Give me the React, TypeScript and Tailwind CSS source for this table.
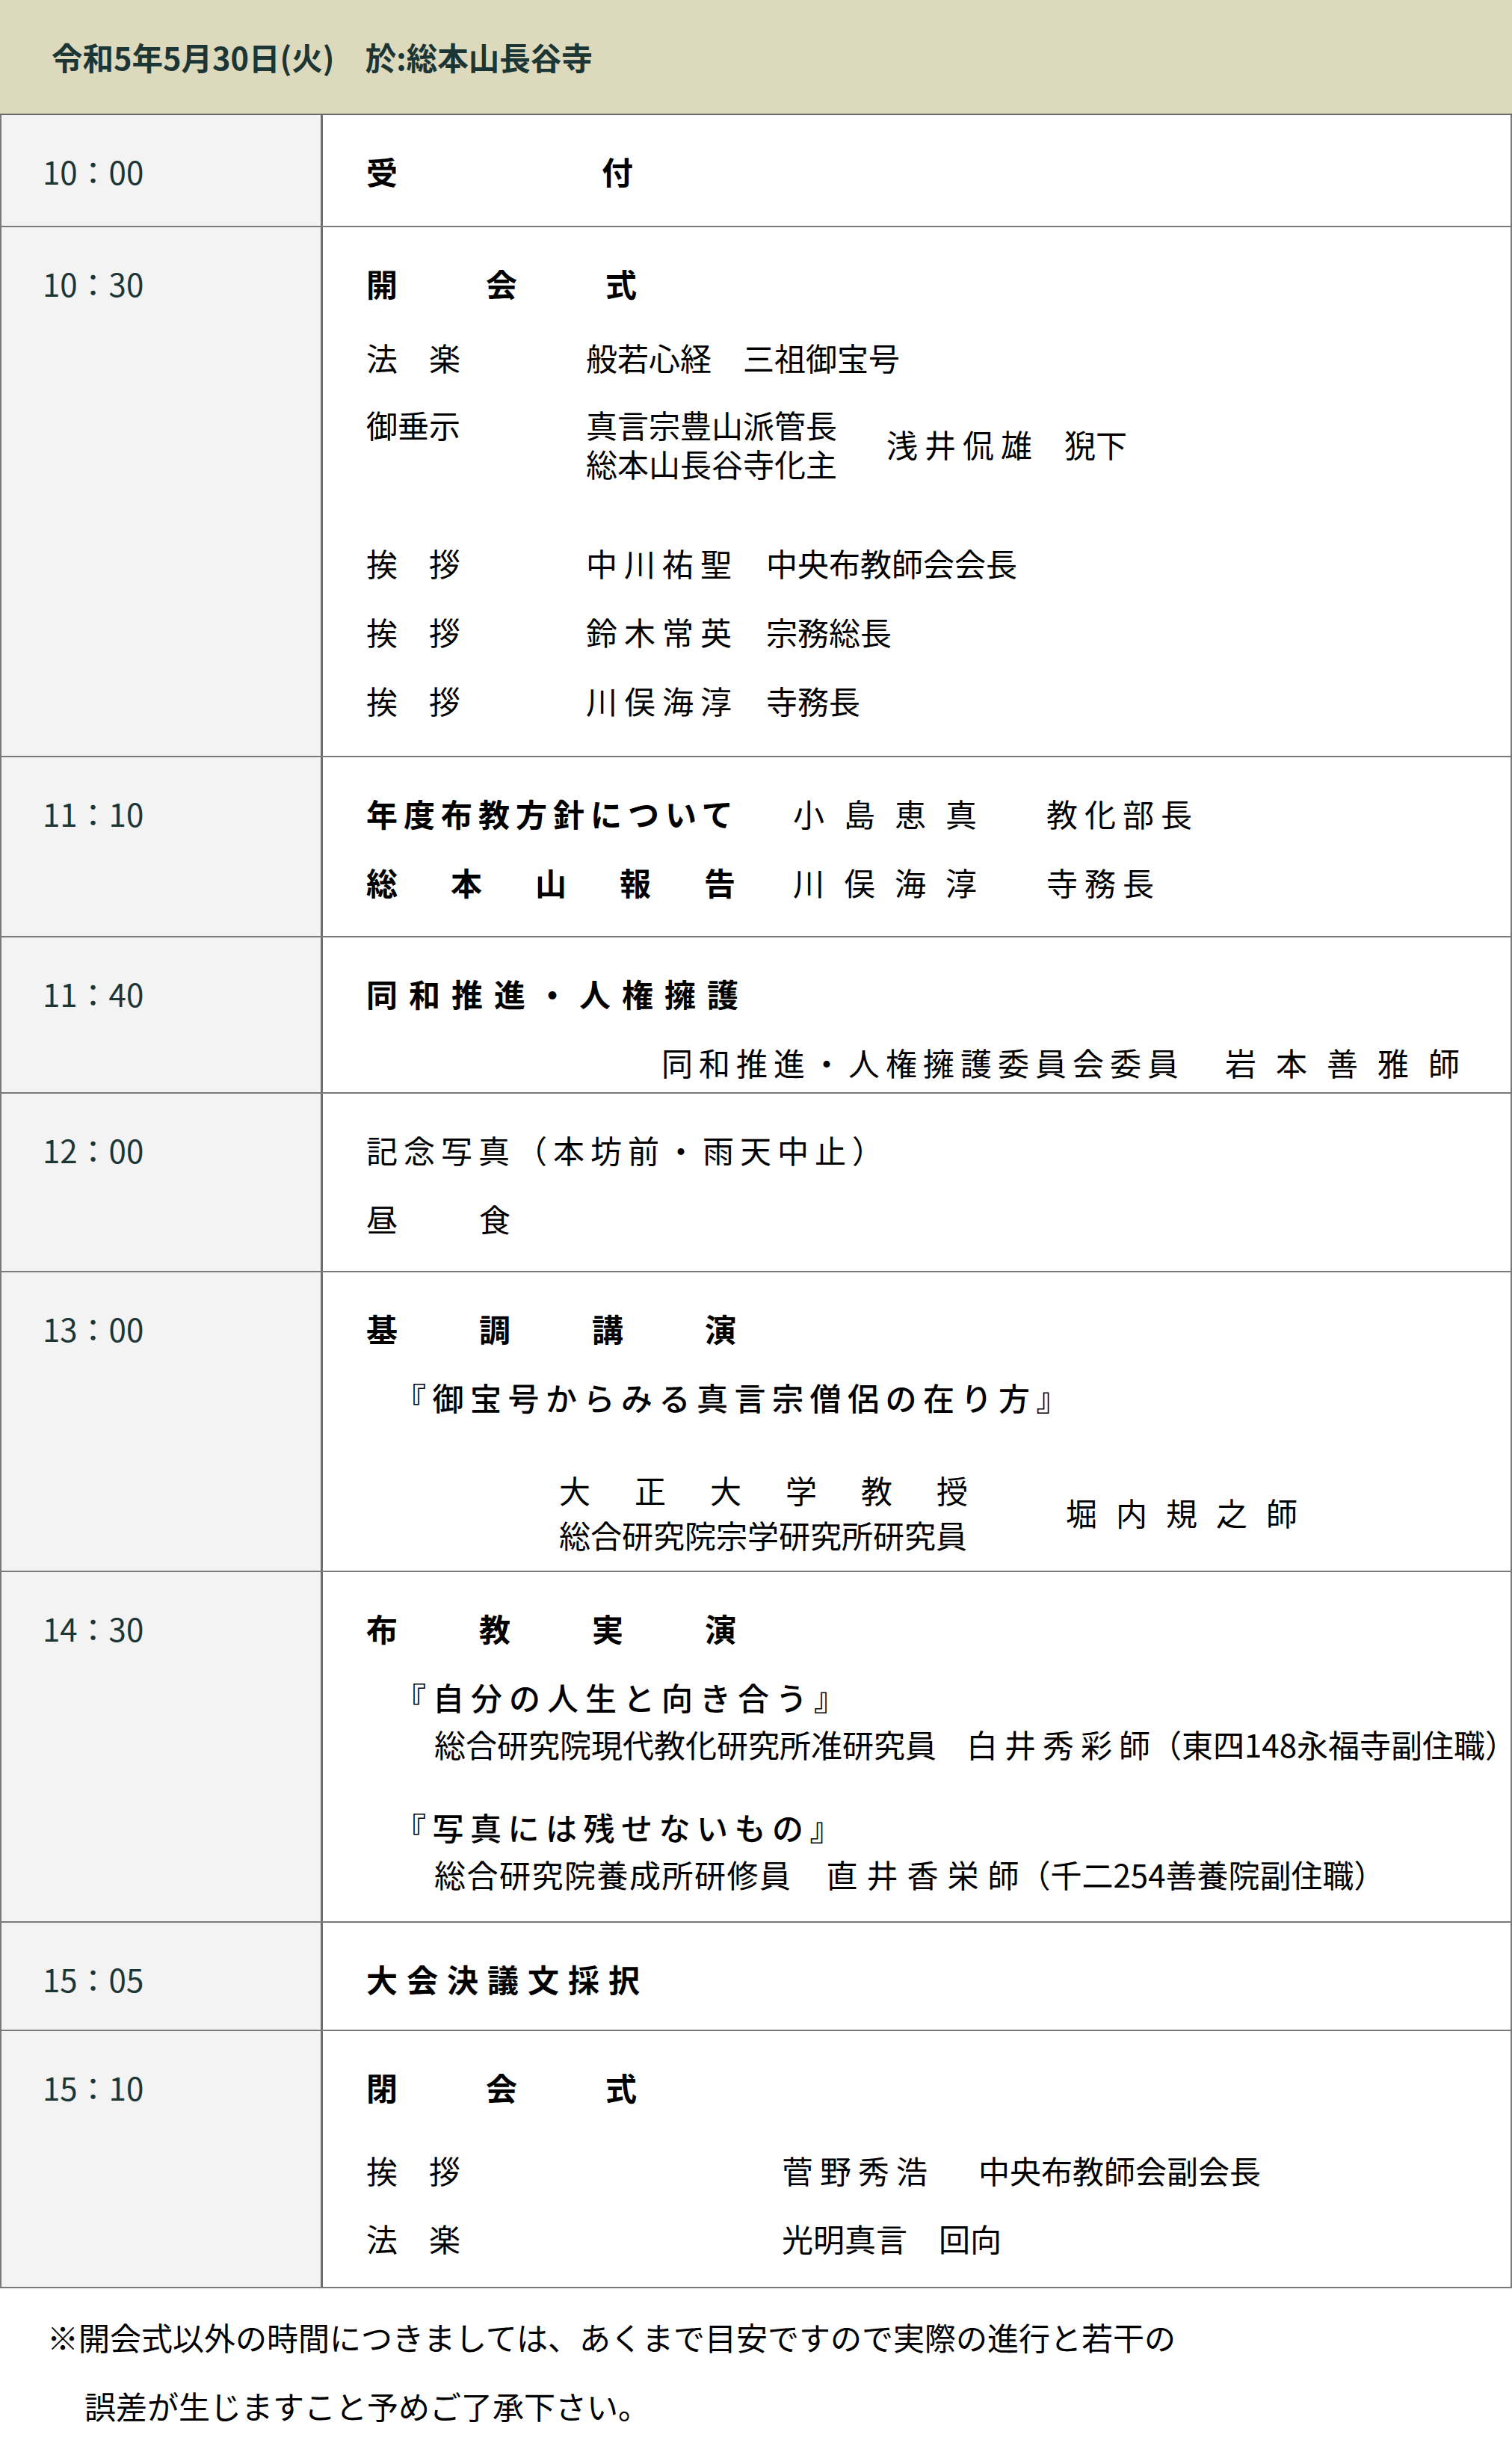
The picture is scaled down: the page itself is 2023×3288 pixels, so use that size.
import type { ReactNode } from 'react';

// --- layout helpers --------------------------------------------------------

/** One text line of the programme: fixed 46px line box, never wraps. */
function L({ className = '', children }: { className?: string; children: ReactNode }) {
  return <div className={'flex h-[46px] items-center whitespace-nowrap ' + className}>{children}</div>;
}

/** A timetable row: grey time cell on the left, programme on the right. */
function Row({ time, className, children }: { time: string; className: string; children: ReactNode }) {
  return (
    <div className={'flex border-b-2 border-[#7a7a7a] ' + className}>
      <div className="w-[430px] shrink-0 border-r-[3px] border-[#6e6e6e] bg-[#f3f3f3] pl-[55px] pt-[52px]">
        <div className="h-[46px] leading-[46px] text-[#1c3636]">{time}</div>
      </div>
      <div className="min-w-0 flex-1 overflow-hidden pl-[58px] pt-[52px] text-black">{children}</div>
    </div>
  );
}

// --- page ------------------------------------------------------------------

export default function App() {
  return (
    <div className="w-[2023px] overflow-hidden bg-white font-['Noto_Sans_CJK_JP','Noto_Sans',sans-serif] text-[42px] leading-[46px]">
      <div className="flex h-[154px] items-center border-b-2 border-[#686868] bg-[#dcd9bc] pl-[69px] text-[41.5px] font-bold text-[#1c3636]">
        令和5年5月30日(火)　於:総本山長谷寺
      </div>

      <div className="border-x-2 border-[#7a7a7a]">
        <Row time="10：00" className="h-[150px]">
          <L className="font-bold">
            <span>受</span>
            <span className="ml-[273px]">付</span>
          </L>
        </Row>

        <Row time="10：30" className="h-[709px]">
          <L className="font-bold tracking-[118px]">開会式</L>
          <L className="mt-[53px]">
            <span className="w-[294px] shrink-0">法　楽</span>
            <span>般若心経　三祖御宝号</span>
          </L>
          <div className="mt-[41px] flex whitespace-nowrap">
            <span className="w-[294px] shrink-0 leading-[52px]">御垂示</span>
            <div className="leading-[52px]">
              <div>真言宗豊山派管長</div>
              <div>総本山長谷寺化主</div>
            </div>
            <div className="ml-[66px] self-center">
              <span className="tracking-[9px]">浅井侃雄</span>
              <span className="ml-[34px]">猊下</span>
            </div>
          </div>
          <L className="mt-[84px]">
            <span className="w-[294px] shrink-0">挨　拶</span>
            <span className="tracking-[9px]">中川祐聖</span>
            <span className="ml-[37px]">中央布教師会会長</span>
          </L>
          <L className="mt-[46px]">
            <span className="w-[294px] shrink-0">挨　拶</span>
            <span className="tracking-[9px]">鈴木常英</span>
            <span className="ml-[37px]">宗務総長</span>
          </L>
          <L className="mt-[46px]">
            <span className="w-[294px] shrink-0">挨　拶</span>
            <span className="tracking-[9px]">川俣海淳</span>
            <span className="ml-[37px]">寺務長</span>
          </L>
        </Row>

        <Row time="11：10" className="h-[241px]">
          <L>
            <span className="w-[571px] shrink-0 font-bold tracking-[8px]">年度布教方針について</span>
            <span className="w-[339px] shrink-0 tracking-[26px]">小島恵真</span>
            <span className="tracking-[9px]">教化部長</span>
          </L>
          <L className="mt-[46px]">
            <span className="w-[571px] shrink-0 font-bold tracking-[71px]">総本山報告</span>
            <span className="w-[339px] shrink-0 tracking-[26px]">川俣海淳</span>
            <span className="tracking-[9px]">寺務長</span>
          </L>
        </Row>

        <Row time="11：40" className="h-[209px]">
          <L className="font-bold tracking-[15px]">同和推進・人権擁護</L>
          <L className="mt-[46px] pl-[395px]">
            <span className="tracking-[8px]">同和推進・人権擁護委員会委員</span>
            <span className="ml-[54px] tracking-[26px]">岩本善雅師</span>
          </L>
        </Row>

        <Row time="12：00" className="h-[239px]">
          <L className="tracking-[8px]">記念写真（本坊前・雨天中止）</L>
          <L className="mt-[46px] tracking-[109px]">昼食</L>
        </Row>

        <Row time="13：00" className="h-[401px]">
          <L className="font-bold tracking-[109px]">基調講演</L>
          <L className="mt-[46px] pl-[38px] font-medium tracking-[8.5px]">『御宝号からみる真言宗僧侶の在り方』</L>
          <div className="mt-[71px] ml-[258px] flex items-center whitespace-nowrap">
            <div className="w-[549px] shrink-0 leading-[60px]">
              <div className="tracking-[59px]">大正大学教授</div>
              <div>総合研究院宗学研究所研究員</div>
            </div>
            <div className="ml-[129px] tracking-[25px]">堀内規之師</div>
          </div>
        </Row>

        <Row time="14：30" className="h-[469px]">
          <L className="font-bold tracking-[109px]">布教実演</L>
          <L className="mt-[46px] pl-[38px] font-medium tracking-[9px]">『自分の人生と向き合う』</L>
          <L className="mt-[17px] pl-[91px]">
            <span>総合研究院現代教化研究所准研究員</span>
            <span className="ml-[40px] tracking-[9px]">白井秀彩</span>
            <span>師（東四148永福寺副住職）</span>
          </L>
          <L className="mt-[65px] pl-[38px] font-medium tracking-[8.5px]">『写真には残せないもの』</L>
          <L className="mt-[17px] pl-[91px]">
            <span className="tracking-[1.5px]">総合研究院養成所研修員</span>
            <span className="ml-[46px] tracking-[12px]">直井香栄</span>
            <span>師（千二254善養院副住職）</span>
          </L>
        </Row>

        <Row time="15：05" className="h-[145px]">
          <L className="font-bold tracking-[12px]">大会決議文採択</L>
        </Row>

        <Row time="15：10" className="h-[344px]">
          <L className="font-bold tracking-[118px]">閉会式</L>
          <L className="mt-[65px]">
            <span className="w-[556px] shrink-0">挨　拶</span>
            <span className="tracking-[9px]">菅野秀浩</span>
            <span className="ml-[59px]">中央布教師会副会長</span>
          </L>
          <L className="mt-[45px]">
            <span className="w-[556px] shrink-0">法　楽</span>
            <span>光明真言　回向</span>
          </L>
        </Row>
      </div>

      <div className="pb-[47px] pl-[63px] pt-[42px] text-black">
        <L>※開会式以外の時間につきましては、あくまで目安ですので実際の進行と若干の</L>
        <L className="mt-[46px] pl-[50px]">誤差が生じますこと予めご了承下さい。</L>
      </div>
    </div>
  );
}
